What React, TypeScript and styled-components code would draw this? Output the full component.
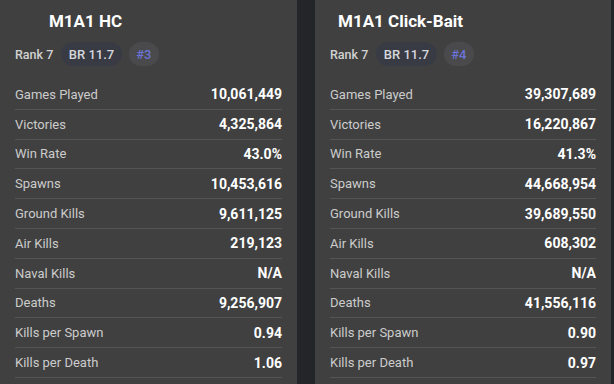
import React from "react";
import styled, { createGlobalStyle } from "styled-components";

const GlobalStyle = createGlobalStyle`
    html, body {
        margin: 0;
        padding: 0;
        background: #232529;
        font-family: Roboto, "Noto Sans", "Liberation Sans", sans-serif;
    }
`;

const Board = styled.div`
    display: grid;
    grid-template-columns: 297px 296px;
    column-gap: 18px;
    width: 614px;
    height: 384px;
    overflow: hidden;
`;

const Card = styled.div`
    background: #404040;
    padding: 0 15px;
    height: 384px;
    box-sizing: border-box;
`;

const Title = styled.div`
    width: 171px;
    margin-left: -15px;
    height: 42px;
    display: flex;
    align-items: center;
    justify-content: center;
    color: #ffffff;
    font-size: 17px;
    font-weight: 700;
`;

const Meta = styled.div`
    display: flex;
    align-items: center;
    gap: 7px;
    height: 24px;
    margin-bottom: 14px;
    font-size: 13px;
    color: #d2d2d2;
`;

const Rank = styled.span`
    font-size: 12.5px;
    font-weight: 500;
    margin-right: 1px;
`;

const Pill = styled.span<{ $accent?: boolean }>`
    display: inline-flex;
    align-items: center;
    height: 24px;
    padding: 0 7.5px;
    border-radius: 12px;
    background: ${(p) => (p.$accent ? "#4a4a4c" : "#393b44")};
    color: ${(p) => (p.$accent ? "#6b73d6" : "#d6d7dc")};
    font-weight: 500;
`;

const Row = styled.div`
    display: flex;
    align-items: center;
    justify-content: space-between;
    height: 29.8px;
    box-sizing: border-box;
    border-bottom: 1px solid #545454;
`;

const Label = styled.span`
    color: #cccccc;
    font-size: 13px;
`;

const Value = styled.span`
    color: #ffffff;
    font-size: 14px;
    font-weight: 700;
`;

type Vehicle = {
    name: string;
    rank: number;
    br: string;
    pos: number;
    stats: [string, string][];
};

const vehicles: Vehicle[] = [
    {
        name: "M1A1 HC",
        rank: 7,
        br: "11.7",
        pos: 3,
        stats: [
            ["Games Played", "10,061,449"],
            ["Victories", "4,325,864"],
            ["Win Rate", "43.0%"],
            ["Spawns", "10,453,616"],
            ["Ground Kills", "9,611,125"],
            ["Air Kills", "219,123"],
            ["Naval Kills", "N/A"],
            ["Deaths", "9,256,907"],
            ["Kills per Spawn", "0.94"],
            ["Kills per Death", "1.06"],
        ],
    },
    {
        name: "M1A1 Click-Bait",
        rank: 7,
        br: "11.7",
        pos: 4,
        stats: [
            ["Games Played", "39,307,689"],
            ["Victories", "16,220,867"],
            ["Win Rate", "41.3%"],
            ["Spawns", "44,668,954"],
            ["Ground Kills", "39,689,550"],
            ["Air Kills", "608,302"],
            ["Naval Kills", "N/A"],
            ["Deaths", "41,556,116"],
            ["Kills per Spawn", "0.90"],
            ["Kills per Death", "0.97"],
        ],
    },
];

const VehicleCard = ({ v }: { v: Vehicle }) => (
    <Card>
        <Title>{v.name}</Title>
        <Meta>
            <Rank>Rank {v.rank}</Rank>
            <Pill>BR {v.br}</Pill>
            <Pill $accent>#{v.pos}</Pill>
        </Meta>
        {v.stats.map(([label, value]) => (
            <Row key={label}>
                <Label>{label}</Label>
                <Value>{value}</Value>
            </Row>
        ))}
    </Card>
);

const App = () => (
    <>
        <GlobalStyle />
        <Board>
            {vehicles.map((v) => (
                <VehicleCard key={v.name} v={v} />
            ))}
        </Board>
    </>
);

export default App;
